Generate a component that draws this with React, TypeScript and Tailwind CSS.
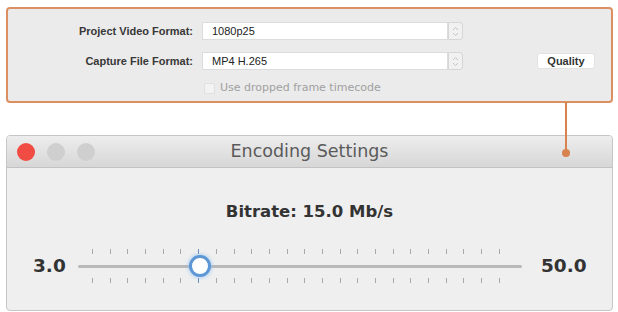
const ticks = Array.from({ length: 24 }, (_, i) => i);

function Stepper() {
  return (
    <div className="flex h-[18px] w-[15px] flex-col items-center justify-center rounded-r-[3px] border border-[#d6d6d6] bg-[#f1f1f1]">
      <svg width="7" height="11" viewBox="0 0 7 11" fill="none" stroke="#c4c4c4" strokeWidth="1">
        <path d="M1 4 L3.5 1.5 L6 4" />
        <path d="M1 7 L3.5 9.5 L6 7" />
      </svg>
    </div>
  );
}

function FormatRow({ label, value, extra }: { label: string; value: string; extra?: boolean }) {
  return (
    <div className="flex h-[18px] items-center">
      <div className="w-[186px] pr-[1px] text-right text-[11px] font-bold text-[#383838]">{label}</div>
      <div className="ml-[8px] flex h-[18px] w-[246px] items-center border border-[#dcdcdc] bg-white pl-[9px] text-[11px] text-[#222]">
        {value}
      </div>
      <Stepper />
      {extra && (
        <div className="ml-[74px] flex h-[16px] w-[58px] items-center justify-center rounded-[3px] border border-[#e2e2e2] bg-white text-[11px] font-bold text-[#333]">
          Quality
        </div>
      )}
    </div>
  );
}

export default function App() {
  return (
    <div
      className="relative h-[312px] w-[618px] overflow-hidden bg-white"
      style={{ fontFamily: '"Liberation Sans", Arial, sans-serif' }}
    >
      <div className="flex flex-col pt-[7px] pl-[6px]">
        {/* project settings panel */}
        <div className="flex h-[96px] w-[607px] flex-col gap-[12px] rounded-[4px] border-2 border-[#dc9062] bg-[#ebebeb] pt-[13px]">
          <FormatRow label="Project Video Format:" value="1080p25" />
          <FormatRow label="Capture File Format:" value="MP4 H.265" extra />
          <div className="-mt-[3px] flex h-[18px] items-center pl-[196px]">
            <div className="h-[11px] w-[11px] rounded-[2px] border border-[#e0e0e0] bg-[#f3f3f3]" />
            <span className="ml-[5px] text-[11px] text-[#a0a0a0]" style={{ fontFamily: '"DejaVu Sans", sans-serif' }}>
              Use dropped frame timecode
            </span>
          </div>
        </div>

        {/* encoding window */}
        <div
          className="mt-[32px] h-[176px] w-[607px] overflow-hidden rounded-[4px] border border-[#c6c6c6] bg-[#efefef]"
          style={{ fontFamily: '"DejaVu Sans", sans-serif' }}
        >
          <div className="relative flex h-[32px] items-center justify-center border-b border-[#c2c2c2] bg-gradient-to-b from-[#ededed] to-[#d7d7d7]">
            <div className="absolute left-[10px] top-[7px] flex gap-[12px]">
              <div className="h-[18px] w-[18px] rounded-full bg-[#f04c43]" />
              <div className="h-[18px] w-[18px] rounded-full bg-[#cfcfcf]" />
              <div className="h-[18px] w-[18px] rounded-full bg-[#cfcfcf]" />
            </div>
            <span className="text-[17.5px] text-[#5a5a5a]">Encoding Settings</span>
          </div>

          <div className="flex flex-col items-center pt-[32px]">
            <div className="text-[16.5px] font-bold text-[#333]">Bitrate: 15.0 Mb/s</div>

            <div className="mt-[21px] flex w-full items-center">
              <span className="ml-[26px] w-[40px] text-[18.5px] font-bold text-[#333]">3.0</span>
              <div className="relative ml-[5px] h-[40px] w-[444px]">
                <div className="absolute left-0 right-0 top-[19px] h-[3px] rounded-full bg-[#b9b9b9]" />
                <div className="absolute left-[14px] right-[22px] top-[3px] flex justify-between">
                  {ticks.map((i) => (
                    <div key={i} className={`h-[5px] w-[1px] ${i === 6 ? 'bg-[#6b8fbf]' : 'bg-[#a9a9a9]'}`} />
                  ))}
                </div>
                <div className="absolute left-[14px] right-[22px] bottom-[3px] flex justify-between">
                  {ticks.map((i) => (
                    <div key={i} className={`h-[5px] w-[1px] ${i === 6 ? 'bg-[#6b8fbf]' : 'bg-[#a9a9a9]'}`} />
                  ))}
                </div>
                <div className="absolute left-[111px] top-[9px] h-[22px] w-[22px] rounded-full border-[3px] border-[#5d97d6] bg-white shadow-[0_0_4px_#8fbff0]" />
              </div>
              <span className="ml-[19px] text-[18.5px] font-bold text-[#333]">50.0</span>
            </div>
          </div>
        </div>
      </div>

      {/* connector between panel and window */}
      <div className="absolute left-[565px] top-[102px] h-[51px] w-[2px] bg-[#d8834f]" />
      <div className="absolute left-[562px] top-[149px] h-[8px] w-[8px] rounded-full bg-[#d8834f]" />
    </div>
  );
}
